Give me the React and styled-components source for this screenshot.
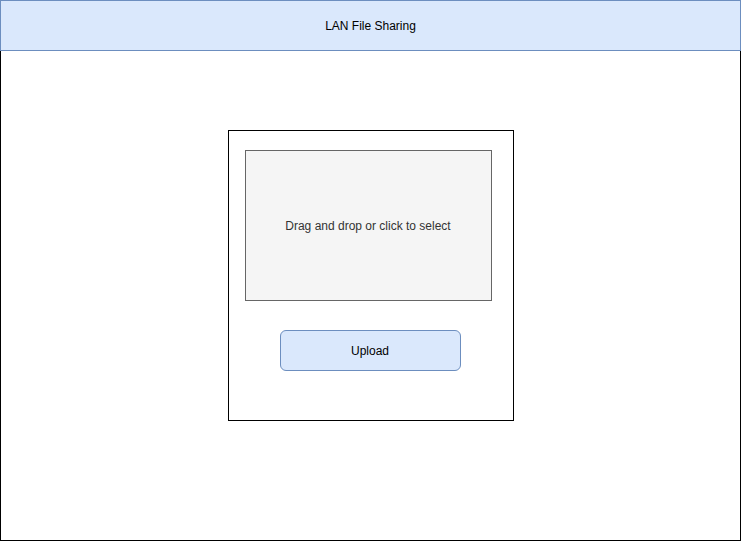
import React from 'react'
import styled, { createGlobalStyle } from 'styled-components'

const GlobalStyle = createGlobalStyle`
  html, body {
    margin: 0;
    padding: 0;
    background: #ffffff;
  }
  body {
    font-family: "Liberation Sans", Arial, sans-serif;
    font-size: 12px;
  }
`

const Page = styled.div`
  width: 741px;
  height: 541px;
  display: flex;
  flex-direction: column;
  box-sizing: border-box;
`

const Header = styled.header`
  height: 51px;
  flex: none;
  box-sizing: border-box;
  border: 1px solid #6c8ebf;
  background: #dae8fc;
  display: flex;
  align-items: center;
  justify-content: center;
  color: #000000;
  font-size: 12px;
`

const Body = styled.main`
  flex: 1;
  box-sizing: border-box;
  border: 1px solid #000000;
  border-top: none;
  display: flex;
  justify-content: center;
  align-items: flex-start;
  padding-top: 79px;
`

const Card = styled.section`
  width: 286px;
  height: 291px;
  box-sizing: border-box;
  border: 1px solid #000000;
  display: flex;
  flex-direction: column;
  align-items: flex-start;
  padding: 19px 0 0 16px;
`

const DropZone = styled.div`
  width: 247px;
  height: 151px;
  box-sizing: border-box;
  border: 1px solid #666666;
  background: #f5f5f5;
  color: #333333;
  display: flex;
  align-items: center;
  justify-content: center;
  font-size: 12px;
  cursor: pointer;
`

const UploadButton = styled.button`
  margin: 29px 0 0 35px;
  width: 181px;
  height: 41px;
  box-sizing: border-box;
  border: 1px solid #6c8ebf;
  border-radius: 6px;
  background: #dae8fc;
  color: #000000;
  font-family: "Liberation Sans", Arial, sans-serif;
  font-size: 12px;
  padding: 0;
  cursor: pointer;
`

export default function App() {
  return (
    <>
      <GlobalStyle />
      <Page>
        <Header>LAN File Sharing</Header>
        <Body>
          <Card>
            <DropZone>Drag and drop or click to select</DropZone>
            <UploadButton>Upload</UploadButton>
          </Card>
        </Body>
      </Page>
    </>
  )
}
